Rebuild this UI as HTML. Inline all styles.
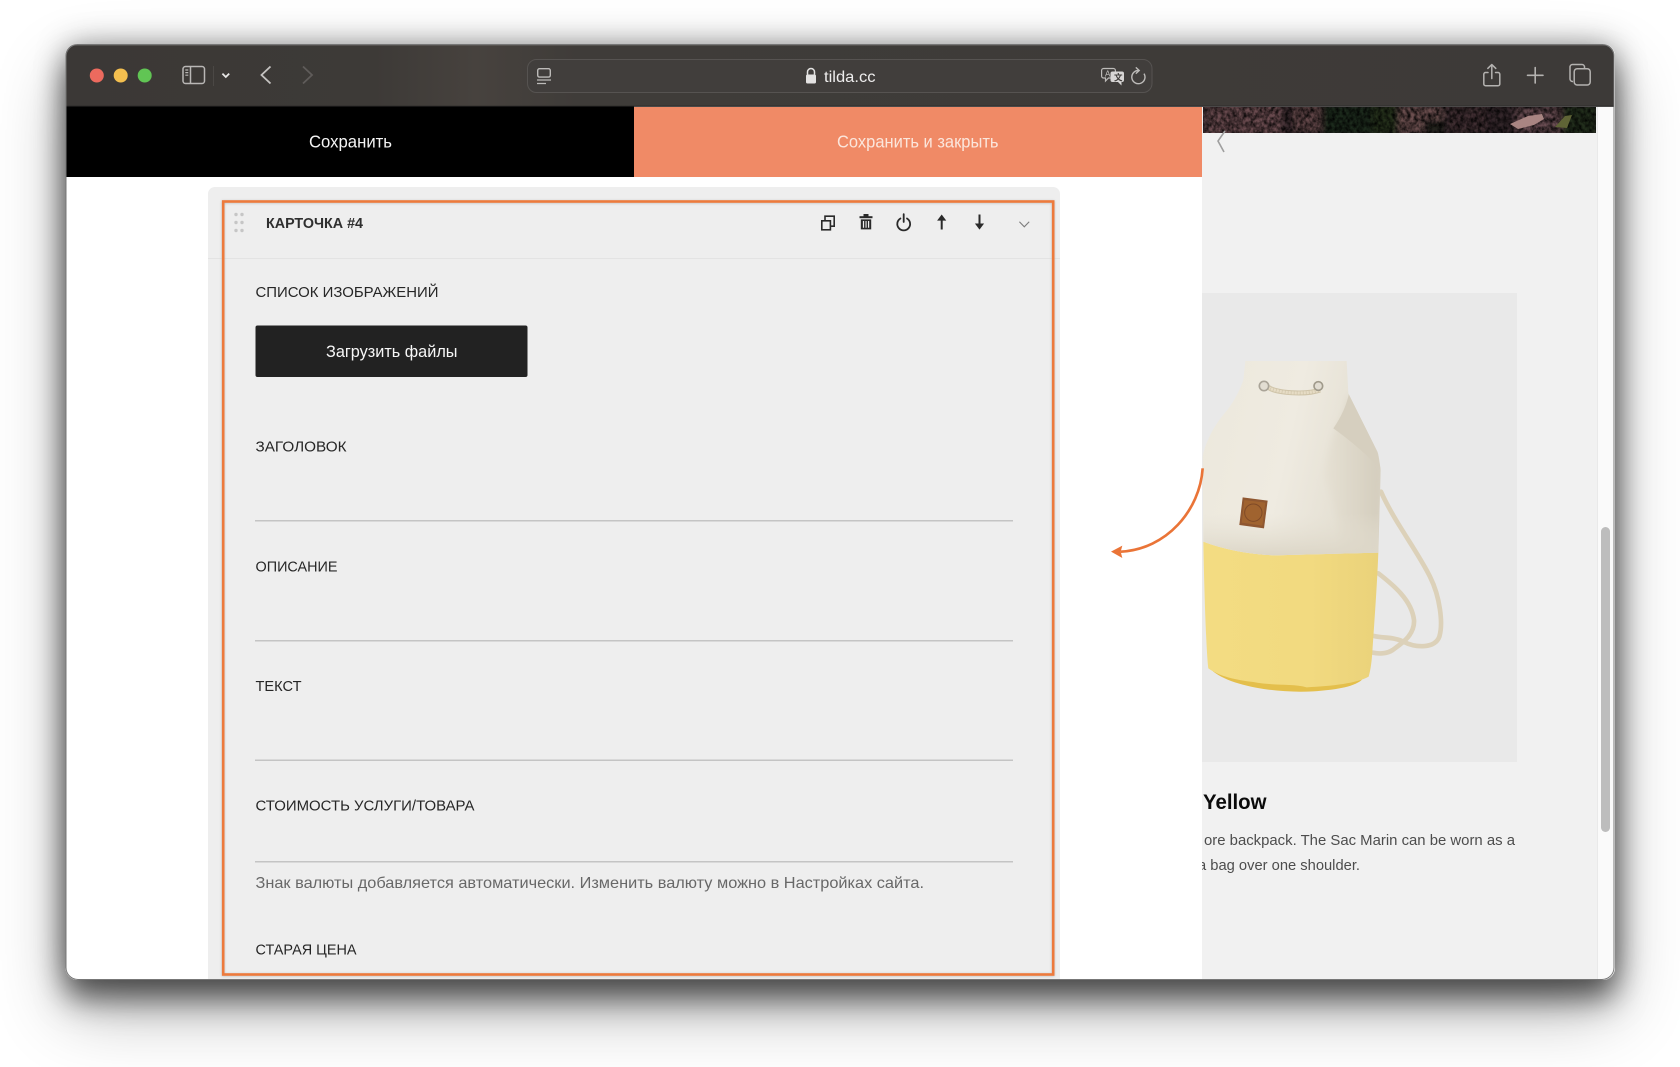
<!DOCTYPE html>
<html lang="ru">
<head>
<meta charset="utf-8">
<title>tilda.cc</title>
<style>
html,body{margin:0;padding:0;width:1680px;height:1067px;background:#fff;overflow:hidden}
.a{position:absolute}
#shadow{left:65.5px;top:44px;width:1549px;height:936px;border-radius:12px;box-shadow:0 20px 30px rgba(0,0,0,.5),0 30px 70px rgba(0,0,0,.3),0 0 30px rgba(0,0,0,.35)}
#win{left:0;top:0;width:1680px;height:1067px;clip-path:inset(44px 65.5px 87px 65.5px round 12px);background:#fff;filter:blur(.35px)}
svg{position:absolute;left:0;top:0}
text{font-family:"Liberation Sans","Noto Sans CJK SC",sans-serif}
</style>
</head>
<body>
<div class="a" id="shadow"></div>
<div class="a" id="win">
<svg width="1680" height="1067" viewBox="0 0 1680 1067">
<defs>
<linearGradient id="tb" x1="0" x2="1" y1="0" y2="0">
<stop offset="0" stop-color="#3b3836"/><stop offset=".2" stop-color="#3d3a37"/><stop offset=".265" stop-color="#47423e"/><stop offset=".33" stop-color="#3f3c39"/><stop offset="1" stop-color="#3d3a38"/>
</linearGradient>
<linearGradient id="canvas" x1="0" x2="1" y1="0" y2="0.25">
<stop offset="0" stop-color="#ece8dc"/><stop offset=".55" stop-color="#efebe1"/><stop offset="1" stop-color="#e2ddd0"/>
</linearGradient>
<linearGradient id="flap" x1="0" x2="1" y1="0" y2="0">
<stop offset="0" stop-color="#e6e1d4"/><stop offset="1" stop-color="#d3ccbc"/>
</linearGradient>
<linearGradient id="low" x1="0" x2="0" y1="0" y2="1">
<stop offset="0" stop-color="#e6e1d4" stop-opacity="0"/><stop offset="1" stop-color="#dcd6c7"/>
</linearGradient>
<linearGradient id="yel" x1="0" x2="1" y1="0" y2="0">
<stop offset="0" stop-color="#f3dc82"/><stop offset=".6" stop-color="#f2da80"/><stop offset="1" stop-color="#ead27a"/>
</linearGradient>
<filter id="b1" x="-10%" y="-50%" width="120%" height="200%"><feGaussianBlur stdDeviation="3"/></filter>
<filter id="b8" x="-30%" y="-30%" width="160%" height="160%"><feGaussianBlur stdDeviation="10"/></filter>
<filter id="ds" x="-20%" y="-20%" width="140%" height="140%"><feGaussianBlur stdDeviation="1.2"/></filter>
<filter id="noise" x="0" y="0" width="100%" height="100%">
<feTurbulence type="fractalNoise" baseFrequency=".28 .22" numOctaves="3" seed="7"/>
<feColorMatrix type="matrix" values="0 0 0 0 0  0 0 0 0 0  0 0 0 0 0  1.8 0 0 0 -.5"/>
</filter>
<clipPath id="strip"><rect x="1203" y="107" width="393" height="26"/></clipPath>
<clipPath id="right"><rect x="1202" y="0" width="478" height="1067"/></clipPath>
<clipPath id="bagtop"><path d="M310 785C370 808 440 822 520 826L835 818L842 570C838 540 835 520 832 515L745 340L740 243L436 243L430 300C420 330 400 370 372 402C340 440 315 490 308 530Z"/></clipPath>
</defs>

<!-- right preview page -->
<rect x="1202" y="107" width="395" height="873" fill="#f1f1f1"/>
<rect x="1597" y="107" width="18" height="873" fill="#fafafa"/>
<rect x="1597" y="107" width="1" height="873" fill="#e9e9e9"/>
<rect x="1601" y="527" width="9" height="305" rx="4.5" fill="#bdbdbd"/>

<!-- rock strip -->
<g clip-path="url(#strip)">
<rect x="1203" y="107" width="393" height="26" fill="#33262a"/>
<g filter="url(#b1)">
<rect x="1205" y="104" width="78" height="32" fill="#6a4b50"/>
<rect x="1292" y="106" width="30" height="26" fill="#63474a"/>
<rect x="1322" y="104" width="50" height="32" fill="#1d2a1f"/>
<rect x="1372" y="102" width="26" height="34" fill="#28301f"/>
<rect x="1398" y="106" width="46" height="28" fill="#6c4f50"/>
<rect x="1424" y="120" width="20" height="14" fill="#20241c"/>
<rect x="1448" y="106" width="38" height="28" fill="#412e33"/>
<rect x="1515" y="108" width="46" height="24" fill="#6b4e52"/>
<rect x="1562" y="104" width="36" height="32" fill="#232e1f"/>
</g>
<rect x="1203" y="107" width="393" height="26" filter="url(#noise)" opacity=".9"/>
<path d="M1510 124l18-8 14-2 2 5-10 6-16 4z" fill="#a98582"/>
<path d="M1555 127l10-11 7-1-5 13z" fill="#5f6436"/>
</g>

<!-- product image -->
<rect x="1202" y="293" width="315" height="469" fill="#e9e9e9"/>
<g clip-path="url(#right)">
<g transform="translate(1100,280) scale(.33333)">
<g fill="none" stroke="#dcd1b9" stroke-width="14" stroke-linecap="round">
<path d="M843 635C880 720 950 810 990 890C1020 950 1030 1030 1018 1070C1005 1105 950 1105 910 1085C880 1070 850 1075 822 1068"/>
<path d="M835 880C880 915 935 960 942 1020C945 1065 905 1090 878 1110C860 1122 835 1122 818 1118"/>
</g>
<path d="M340 1175C400 1222 540 1240 640 1234C700 1230 760 1222 785 1200L790 1170L330 1160Z" fill="#e4bf4c"/>
<path d="M310 785C370 808 440 822 520 826L835 818C832 900 825 1000 818 1100C816 1140 812 1170 806 1190C770 1210 700 1218 620 1222C580 1210 520 1218 460 1206C410 1200 360 1190 325 1165C318 1110 312 900 310 785Z" fill="url(#yel)"/>
<path d="M310 785C370 808 440 822 520 826L835 818L842 570C838 540 835 520 832 515L745 340L740 243L436 243L430 300C420 330 400 370 372 402C340 440 315 490 308 530Z" fill="url(#canvas)"/>
<g clip-path="url(#bagtop)">
<path d="M745 340L840 515L850 570L840 820L720 820C720 740 700 650 672 590C680 540 690 480 715 430C730 400 742 370 745 340Z" fill="url(#flap)" filter="url(#b8)"/>
<path d="M748 335L832 515L842 570C800 520 735 470 700 445C725 410 742 370 748 335Z" fill="#d6cfbf"/>
</g>
<path d="M310 700L835 700L835 818L520 826C440 822 370 808 310 785Z" fill="url(#low)"/>
<path d="M505 322C530 340 620 345 660 330" fill="none" stroke="#cfc4a9" stroke-width="15"/>
<path d="M505 322C530 340 620 345 660 330" fill="none" stroke="#e6dcc5" stroke-width="9" stroke-dasharray="7 2"/>
<circle cx="492" cy="318" r="14" fill="#e2ddd2" stroke="#aaa498" stroke-width="5"/>
<circle cx="655" cy="318" r="13" fill="#e2ddd2" stroke="#a09a8b" stroke-width="5"/>
<path d="M428 652L503 662L492 745L418 735Z" fill="#8f5730"/>
<path d="M433 660L496 668L487 737L425 728Z" fill="#a0632f"/>
<circle cx="460" cy="698" r="26" fill="none" stroke="#7f4a27" stroke-width="3"/>
</g>
</g>
<!-- annotation arrow -->
<g transform="translate(1100,280) scale(.33333)">
<path d="M308 565C300 690 200 808 62 815" fill="none" stroke="#ea7437" stroke-width="8"/>
<path d="M33 815L67 797L62 815L67 834Z" fill="#ea7437"/>
</g>

<!-- chevron on preview -->
<path d="M1225 131L1218 141L1224 152" fill="none" stroke="#9f9f9f" stroke-width="1.6"/>

<!-- preview text -->
<text x="1203" y="809" font-size="21" font-weight="700" fill="#0b0b0b" textLength="63.5" lengthAdjust="spacingAndGlyphs">Yellow</text>
<g clip-path="url(#right)" font-size="15" fill="#4d4d4d">
<text x="1204" y="845" textLength="311" lengthAdjust="spacingAndGlyphs">ore backpack. The Sac Marin can be worn as a</text>
<text x="1198" y="870" textLength="162" lengthAdjust="spacingAndGlyphs">a bag over one shoulder.</text>
</g>

<!-- action bar -->
<rect x="65" y="106" width="569" height="71" fill="#000"/>
<rect x="634" y="107" width="568" height="70" fill="#f08a66"/>
<text x="309" y="147.5" font-size="17.5" fill="#f4f4f4" textLength="83" lengthAdjust="spacingAndGlyphs">Сохранить</text>
<text x="837" y="147.5" font-size="17.5" fill="#fbe6dc" textLength="161.5" lengthAdjust="spacingAndGlyphs">Сохранить и закрыть</text>

<!-- card -->
<path d="M208 981V194a7 7 0 0 1 7-7H1053a7 7 0 0 1 7 7V981Z" fill="#eeeeee"/>
<rect x="208" y="258" width="852" height="1" fill="#e3e3e3"/>
<g fill="#c6c6c6">
<circle cx="236" cy="214.5" r="1.7"/><circle cx="242" cy="214.5" r="1.7"/>
<circle cx="236" cy="222.5" r="1.7"/><circle cx="242" cy="222.5" r="1.7"/>
<circle cx="236" cy="230.5" r="1.7"/><circle cx="242" cy="230.5" r="1.7"/>
</g>
<text x="266" y="228" font-size="14.5" font-weight="700" fill="#2f2f2f" textLength="97" lengthAdjust="spacingAndGlyphs">КАРТОЧКА #4</text>

<!-- card icons -->
<g fill="none" stroke="#2a2a2a" stroke-width="1.6">
<rect x="821.8" y="220.8" width="8.6" height="9"/>
<path d="M825 220.5V216.2H834.2V226.2H830.6"/>
</g>
<g fill="#2a2a2a">
<rect x="859.5" y="216.2" width="13" height="2"/>
<rect x="863.5" y="214" width="5" height="2.5"/>
<path d="M860.8 219.4H871.2V229.4H860.8ZM862.9 221V227.8H864.1V221ZM865.5 221V227.8H866.6V221ZM868 221V227.8H869.2V221Z" fill-rule="evenodd"/>
</g>
<g fill="none" stroke="#2a2a2a" stroke-width="1.8" stroke-linecap="round">
<path d="M900.4 218.5A6.4 6.4 0 1 0 907 218.5"/>
<path d="M903.7 214.2V222"/>
</g>
<g fill="#2a2a2a">
<path d="M940.7 219.5V229.5H942.7V219.5Z"/><path d="M941.7 214.5L946.3 220.6H937.1Z"/>
<path d="M978.5 214.5V224.5H980.5V214.5Z"/><path d="M979.5 229.6L984.1 223.5H974.9Z"/>
</g>
<path d="M1019.4 221.8L1024.3 226.8L1029.2 221.8" fill="none" stroke="#7d7d7d" stroke-width="1.1"/>

<!-- form -->
<g font-size="15" fill="#262626">
<text x="255.5" y="297" textLength="183" lengthAdjust="spacingAndGlyphs">СПИСОК ИЗОБРАЖЕНИЙ</text>
<text x="255.5" y="451.5" textLength="91" lengthAdjust="spacingAndGlyphs">ЗАГОЛОВОК</text>
<text x="255.5" y="571.5" textLength="82" lengthAdjust="spacingAndGlyphs">ОПИСАНИЕ</text>
<text x="255.5" y="691" textLength="46" lengthAdjust="spacingAndGlyphs">ТЕКСТ</text>
<text x="255.5" y="810.5" textLength="219" lengthAdjust="spacingAndGlyphs">СТОИМОСТЬ УСЛУГИ/ТОВАРА</text>
<text x="255.5" y="954.5" textLength="101" lengthAdjust="spacingAndGlyphs">СТАРАЯ ЦЕНА</text>
</g>
<rect x="255.5" y="325.5" width="272" height="51.5" rx="2" fill="#222222"/>
<text x="326" y="357" font-size="17" fill="#f7f7f7" font-weight="400" textLength="131.5" lengthAdjust="spacingAndGlyphs">Загрузить файлы</text>
<g fill="#c4c4c4">
<rect x="255" y="520" width="758" height="1.5"/>
<rect x="255" y="640" width="758" height="1.5"/>
<rect x="255" y="759.5" width="758" height="1.5"/>
<rect x="255" y="861" width="758" height="1.5"/>
</g>
<text x="255.5" y="888" font-size="16" fill="#686868" textLength="668.5" lengthAdjust="spacingAndGlyphs">Знак валюты добавляется автоматически. Изменить валюту можно в Настройках сайта.</text>

<!-- orange highlight rect -->
<rect x="223.2" y="202" width="830" height="773" fill="none" stroke="#a9a9a9" stroke-width="2.5" filter="url(#ds)" opacity=".7"/>
<rect x="223.2" y="201.5" width="830" height="773" fill="none" stroke="#ed7a3c" stroke-width="2.6"/>

<!-- toolbar -->
<rect x="65" y="44" width="1550" height="62.5" fill="url(#tb)"/>
<rect x="65" y="44" width="1550" height="1.5" fill="#6a6764"/>
<rect x="65" y="105.8" width="1550" height="1" fill="#1d1c1b"/>
<circle cx="96.8" cy="75.5" r="7" fill="#ec6a5e"/>
<circle cx="120.7" cy="75.5" r="7" fill="#f4bf4f"/>
<circle cx="144.7" cy="75.5" r="7" fill="#61c554"/>

<!-- sidebar -->
<g fill="none" stroke="#b9b7b5" stroke-width="1.5">
<rect x="183" y="66.5" width="21.5" height="17" rx="2.5"/>
<path d="M190.5 66.5V83.5"/>
</g>
<path d="M185.3 70H188.3M185.3 72.6H188.3M185.3 75.2H188.3" stroke="#b9b7b5" stroke-width="1.2"/>
<rect x="213" y="66" width="1" height="20" fill="#4b4845"/>
<path d="M222.4 73.6L225.8 77L229.2 73.6" fill="none" stroke="#e8e7e6" stroke-width="1.8"/>
<path d="M270.5 66.5L261.5 75L270.5 83.5" fill="none" stroke="#c5c3c1" stroke-width="1.8"/>
<path d="M303 66.5L312 75L303 83.5" fill="none" stroke="#5f5c5a" stroke-width="1.8"/>

<!-- address bar -->
<rect x="527.5" y="59.5" width="624.5" height="33" rx="9" fill="#413e3c" stroke="#565351" stroke-width="1"/>
<g fill="none" stroke="#bdbbb9" stroke-width="1.4">
<rect x="537.7" y="68.7" width="12.6" height="8.4" rx="1.8"/>
</g>
<path d="M537 80H551M537 83.5H546" stroke="#bdbbb9" stroke-width="1.3"/>
<path d="M807.5 74.5V72a3.5 3.5 0 0 1 7 0V74.5" fill="none" stroke="#e4e3e2" stroke-width="1.5"/>
<rect x="806" y="74.5" width="10" height="9" rx="1.5" fill="#e4e3e2"/>
<text x="824" y="82" font-size="16" fill="#eeeded" textLength="51.5" lengthAdjust="spacingAndGlyphs">tilda.cc</text>

<!-- translate -->
<path d="M1103.6 68.5H1113.4a2 2 0 0 1 2 2V76a2 2 0 0 1-2 2H1108.5L1105.5 81V78H1103.6a2 2 0 0 1-2-2V70.5a2 2 0 0 1 2-2Z" fill="#413e3c" stroke="#bdbbb9" stroke-width="1.2"/>
<path d="M1112.5 71.5H1122a2 2 0 0 1 2 2V80a2 2 0 0 1-2 2H1121.5V85.5L1118 82H1112.5a2 2 0 0 1-2-2V73.5a2 2 0 0 1 2-2Z" fill="#d8d6d5"/>
<text x="1105" y="76.5" font-size="8" fill="#c8c6c4">A</text>
<text x="1114" y="80.5" font-size="8.5" fill="#3d3a38" font-weight="700">文</text>
<!-- reload -->
<path d="M1138.5 70.5A6.6 6.6 0 1 0 1144 73.6" fill="none" stroke="#bdbbb9" stroke-width="1.4"/>
<path d="M1135.8 67.4L1139.2 70.5L1135.8 73.6" fill="none" stroke="#bdbbb9" stroke-width="1.4"/>

<!-- share -->
<g fill="none" stroke="#b4b2b0" stroke-width="1.5" stroke-linecap="round" stroke-linejoin="round">
<path d="M1488 72.5H1485.6a1.8 1.8 0 0 0-1.8 1.8V84a1.8 1.8 0 0 0 1.8 1.8H1498a1.8 1.8 0 0 0 1.8-1.8V74.3a1.8 1.8 0 0 0-1.8-1.8H1495.5"/>
<path d="M1491.8 78.5V64.8M1487.8 68.4L1491.8 64.6L1495.8 68.4"/>
</g>
<path d="M1527.5 75.3H1543M1535.2 67.5V83" stroke="#b4b2b0" stroke-width="1.6" stroke-linecap="round"/>
<g fill="none" stroke="#b4b2b0" stroke-width="1.5">
<path d="M1573 81.5H1572.5a2.5 2.5 0 0 1-2.5-2.5V67a2.5 2.5 0 0 1 2.5-2.5H1582a2.5 2.5 0 0 1 2.5 2.5V68.5"/>
<rect x="1574.2" y="68.7" width="16" height="16.3" rx="3"/>
</g>

<!-- window edge -->
<rect x="66" y="44.5" width="1548" height="935" rx="12" fill="none" stroke="#777" stroke-width="1"/>
</svg>
</div>
</body>
</html>
